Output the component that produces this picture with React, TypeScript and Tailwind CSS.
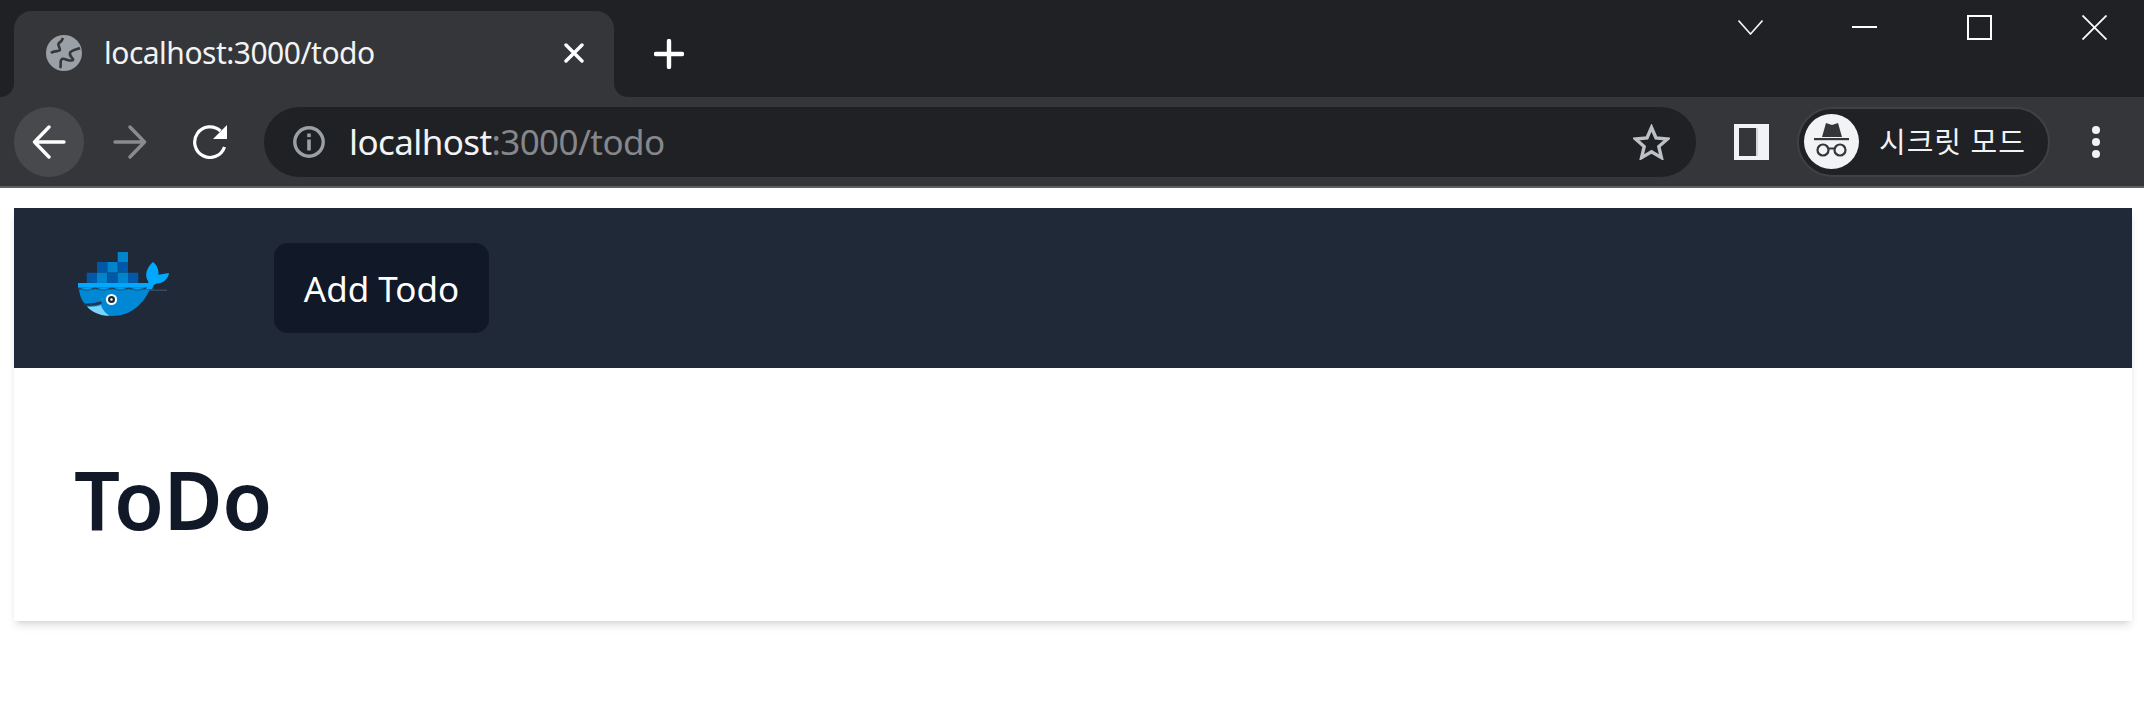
function WhaleLogo() {
  const wave = "q8.5 3 17 0 q8.5 3 17 0 q8.5 3 17 0 q8.5 3 17 0 q4 1.5 8 0";
  return (
    <svg width="100" height="72" viewBox="0 0 100 72" className="shrink-0">
      <rect x="43.7" y="4" width="10.3" height="10" fill="#0085cc" />
      <rect x="23" y="14" width="10.4" height="10.7" fill="#0058a6" />
      <rect x="33.4" y="14" width="10.3" height="10.7" fill="#0085cc" />
      <rect x="43.7" y="14" width="10.3" height="10.7" fill="#0058a6" />
      <rect x="12.7" y="24.7" width="10.3" height="10.5" fill="#0058a6" />
      <rect x="23" y="24.7" width="10.4" height="10.5" fill="#0085cc" />
      <rect x="33.4" y="24.7" width="10.3" height="10.5" fill="#0058a6" />
      <rect x="43.7" y="24.7" width="10.3" height="10.5" fill="#0085cc" />
      <rect x="54" y="24.7" width="10.3" height="10.5" fill="#0058a6" />
      <path d="M5 41 C6 58 22 68 38 68 C56 68 69 57 76 41 Z" fill="#0088d4" />
      <path d="M13 58.5 C19 59 24 58.5 27 57 C28 61 31 64.5 35 67.6 C26 68 18 64 13 58.5 Z" fill="#7cd4fb" />
      <path d="M9.5 56.5 C16 57 22 56.5 27.5 54.5" fill="none" stroke="#22384d" strokeWidth="2.4" />
      <path d="M4 35 H76 V39.5 H4 Z" fill="#00a8ff" />
      <path d={`M4 39.5 ${wave}`} fill="#00a8ff" />
      <path d={`M4 40.8 ${wave}`} fill="none" stroke="#1d5a85" strokeWidth="1" />
      <path d="M76 42.3 H93" stroke="#34495e" strokeWidth="1.6" />
      <path
        d="M79 14 C73 19 70 27 74 33 C75 36 74 38 72 41 L78 41 C79 38 80 36 83 35.5 C90 35 94 31 95 25 C91 26 86 26 84.5 27 C85 22 83 17 79 14 Z"
        fill="#00a8ff"
      />
      <circle cx="37.5" cy="51.5" r="5.6" fill="#fff" />
      <circle cx="37.5" cy="51.5" r="3.5" fill="#1f2937" />
      <circle cx="37.5" cy="51.5" r="1.2" fill="#fff" />
    </svg>
  );
}

function Globe() {
  return (
    <svg width="36" height="36" viewBox="0 0 36 36" className="shrink-0">
      <circle cx="18" cy="18" r="18" fill="#9aa0a6" />
      <path d="M5 18 C8 15 13 17 14 15 C14 12 11 10 13 8 C15 7 16 6 17 3" fill="none" stroke="#35363a" strokeWidth="2.6" />
      <path d="M34 13 C30 15 25 15 24 18 C23 22 28 23 27 25 C25 27 18 23 16 24 C13 26 16 30 14 33" fill="none" stroke="#35363a" strokeWidth="2.6" />
    </svg>
  );
}

function WindowControls() {
  return (
    <div className="ml-auto mr-[37px] flex items-start">
      <svg width="25" height="15" viewBox="0 0 25 15" className="mt-[20px]">
        <path d="M0.5 0.5 L12.5 14 L24.5 0.5" fill="none" stroke="#f1f3f4" strokeWidth="1.6" />
      </svg>
      <div className="ml-[89px] mt-[26px] h-[2px] w-[25px] bg-white" />
      <div className="ml-[90px] mt-[15px] h-[25px] w-[25px] border-2 border-white" />
      <svg width="25" height="25" viewBox="0 0 25 25" className="ml-[90px] mt-[15px]">
        <path d="M0.5 0.5 L24.5 24.5 M24.5 0.5 L0.5 24.5" stroke="#fff" strokeWidth="1.8" />
      </svg>
    </div>
  );
}

function TabStrip() {
  return (
    <div className="flex h-[97px] items-end bg-[#202124]">
      <div className="relative ml-[14px] flex h-[86px] w-[600px] items-center rounded-t-[18px] bg-[#35363a] pb-[2px] pl-[32px]">
        <span className="absolute bottom-0 left-[-14px] h-[14px] w-[14px] bg-[#35363a]">
          <span className="block h-full w-full rounded-br-[14px] bg-[#202124]" />
        </span>
        <span className="absolute bottom-0 right-[-14px] h-[14px] w-[14px] bg-[#35363a]">
          <span className="block h-full w-full rounded-bl-[14px] bg-[#202124]" />
        </span>
        <Globe />
        <span className="ml-[22px] text-[30px] leading-none tracking-[-0.5px] text-[#f1f3f4]">localhost:3000/todo</span>
        <svg width="20" height="20" viewBox="0 0 20 20" className="ml-auto mr-[30px]">
          <path d="M2 2 L18 18 M18 2 L2 18" stroke="#fff" strokeWidth="3.4" strokeLinecap="round" />
        </svg>
      </div>
      <svg width="30" height="30" viewBox="0 0 30 30" className="mb-[28px] ml-[40px]">
        <path d="M15 2 V28 M2 15 H28" stroke="#fff" strokeWidth="4.4" strokeLinecap="round" />
      </svg>
      <div className="flex flex-1 self-start">
        <WindowControls />
      </div>
    </div>
  );
}

function Toolbar() {
  return (
    <div className="flex h-[91px] items-center border-b-2 border-[#5f6064] bg-[#35363a] pl-[14px]">
      <div className="flex h-[70px] w-[70px] items-center justify-center rounded-full bg-[#48494d]">
        <svg width="34" height="34" viewBox="0 0 34 34">
          <path d="M32 17 H3 M17 2 L2.5 17 L17 32" fill="none" stroke="#fff" strokeWidth="3.4" strokeLinecap="round" strokeLinejoin="round" />
        </svg>
      </div>
      <svg width="34" height="34" viewBox="0 0 34 34" className="ml-[29px]">
        <path d="M2 17 H31 M17 2 L31.5 17 L17 32" fill="none" stroke="#8a8b8e" strokeWidth="3.4" strokeLinecap="round" strokeLinejoin="round" />
      </svg>
      <svg width="34" height="34" viewBox="0 0 34 34" className="ml-[46px]">
        <path d="M27.5 6 A15.3 15.3 0 1 0 31.5 22" fill="none" stroke="#fff" strokeWidth="3.2" />
        <path d="M34 0 V14 H20 Z" fill="#fff" />
      </svg>
      <div className="ml-[37px] flex h-[70px] w-[1432px] items-center rounded-full bg-[#202124] pl-[29px] pr-[26px]">
        <svg width="32" height="32" viewBox="0 0 32 32" className="shrink-0">
          <circle cx="16" cy="16" r="14.2" fill="none" stroke="#9aa0a6" strokeWidth="3.4" />
          <rect x="14.2" y="7.5" width="3.6" height="3.6" fill="#9aa0a6" />
          <rect x="14.2" y="13.5" width="3.6" height="11" fill="#9aa0a6" />
        </svg>
        <span className="ml-[24px] text-[35px] leading-none tracking-[-0.6px] text-[#f1f3f4]">
          localhost<span className="text-[#85878b]">:3000/todo</span>
        </span>
        <svg width="37" height="36" viewBox="0 0 37 36" className="ml-auto shrink-0">
          <path d="M18.5 3.5 L23 14 L34.5 15 L25.8 22.5 L28.4 33.6 L18.5 27.7 L8.6 33.6 L11.2 22.5 L2.5 15 L14 14 Z" fill="none" stroke="#bdc1c6" strokeWidth="3.4" strokeLinejoin="miter" />
        </svg>
      </div>
      <div className="ml-[38px] flex h-[36px] w-[35px] bg-[#f1f3f4] py-[4px] pl-[5px]">
        <div className="h-full w-[17px] bg-[#35363a]" />
        <div className="h-full w-[2px] bg-[#d4d6d8]" />
      </div>
      <div className="ml-[28px] flex h-[70px] w-[253px] items-center rounded-full border-2 border-[#404144] bg-[#202124] pl-[5px]">
        <div className="flex h-[55px] w-[55px] shrink-0 items-center justify-center rounded-full bg-[#f1f3f4]">
          <svg width="55" height="55" viewBox="0 0 55 55">
            <path d="M18 23 L22 9 L28 11 L34 9 L38 23 Z" fill="#35363a" />
            <rect x="10" y="24" width="35" height="2.2" fill="#35363a" />
            <circle cx="19" cy="36" r="5.5" fill="none" stroke="#35363a" strokeWidth="2.2" />
            <circle cx="36" cy="36" r="5.5" fill="none" stroke="#35363a" strokeWidth="2.2" />
            <path d="M24.5 34.5 H30.5" stroke="#35363a" strokeWidth="2" />
          </svg>
        </div>
        <span className="ml-[20px] whitespace-nowrap text-[29px] leading-none tracking-[1px] text-[#f1f3f4]">시크릿 모드</span>
      </div>
      <div className="ml-[42px] flex flex-col gap-[4px]">
        <span className="h-[8px] w-[8px] rounded-full bg-[#f1f3f4]" />
        <span className="h-[8px] w-[8px] rounded-full bg-[#f1f3f4]" />
        <span className="h-[8px] w-[8px] rounded-full bg-[#f1f3f4]" />
      </div>
    </div>
  );
}

export default function App() {
  return (
    <div className="min-h-[722px] overflow-hidden bg-white font-['Noto_Sans','Noto_Sans_CJK_KR',sans-serif]">
      <TabStrip />
      <Toolbar />
      <div className="ml-[14px] mr-[12px] mt-[20px] shadow-[0_6px_9px_-2px_rgba(0,0,0,0.12),0_3px_6px_-3px_rgba(0,0,0,0.1)]">
        <nav className="flex h-[160px] items-center bg-[#1f2937] pl-[60px]">
          <div className="mb-[8px]">
            <WhaleLogo />
          </div>
          <button className="ml-[100px] h-[90px] w-[215px] rounded-[14px] bg-[#111827] pt-[2px] text-[35px] text-white">
            Add Todo
          </button>
        </nav>
        <div className="flex h-[253px] items-center bg-white pl-[60px] pt-[8px]">
          <h1 className="text-[81px] font-semibold leading-none tracking-[-0.5px] text-[#111827]">ToDo</h1>
        </div>
      </div>
    </div>
  );
}
